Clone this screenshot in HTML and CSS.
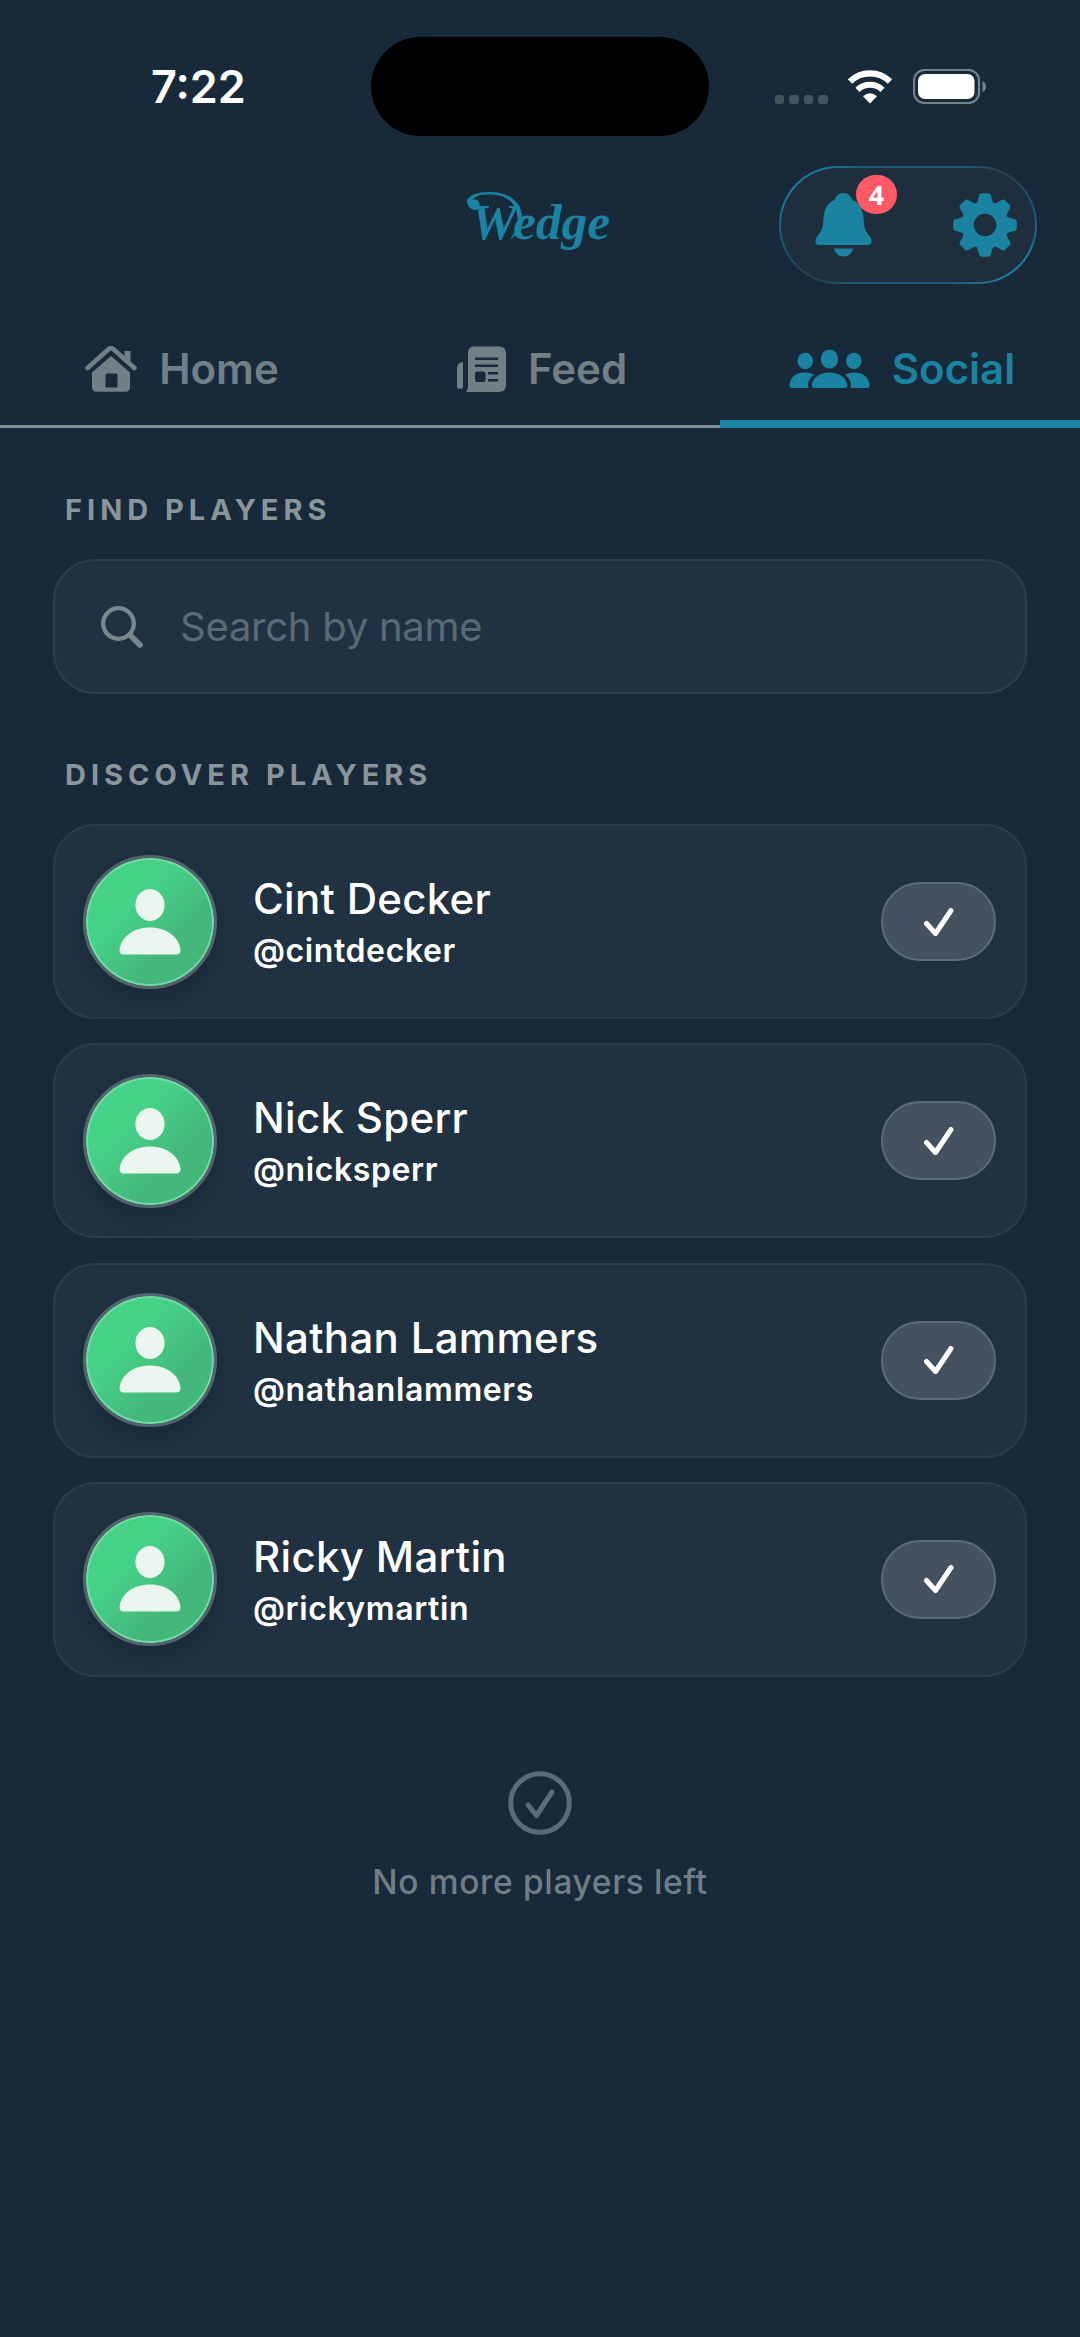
FILE: index.html
```html
<!DOCTYPE html>
<html lang="en">
<head>
<meta charset="utf-8">
<title>Wedge</title>
<link rel="stylesheet" href="styles.css">
</head>
<body>
<svg width="0" height="0" class="defs" aria-hidden="true">
  <symbol id="person" viewBox="0 0 62 66"><ellipse cx="31" cy="16" rx="14.6" ry="16"/><path d="M5 65.500Q0.500 65.500 0.500 61C2 48 14 38.500 31 38.500S60 48 61.500 61Q61.500 65.500 57 65.500Z"/></symbol>
  <symbol id="check" viewBox="0 0 30 28"><path d="M2.500 15.500L11.500 25.500L27 2.500" fill="none" stroke="currentColor" stroke-width="5" stroke-linecap="round" stroke-linejoin="round"/></symbol>
</svg>

<header>
  <div class="status">
    <div class="time">7:22</div>
    <div class="island"></div>
    <div class="signals">
      <div class="dots"><i></i><i></i><i></i><i></i></div>
      <svg class="wifi" viewBox="0 0 46 34" fill="none">
        <path d="M3 11.500A28.500 28.500 0 0 1 43 11.500" stroke="#fff" stroke-width="6.200"/>
        <path d="M10.500 19.800A18 18 0 0 1 35.500 19.800" stroke="#fff" stroke-width="6"/>
        <path d="M23 33.500L16 26.300Q23 20.300 30 26.300Z" fill="#fff"/>
      </svg>
      <svg class="battery" viewBox="0 0 74 35">
        <rect x="1" y="1" width="65" height="33" rx="10.500" fill="none" stroke="#74808a" stroke-width="2.200"/>
        <rect x="5" y="5" width="56.500" height="25" rx="7" fill="#fff"/>
        <path d="M69.500 12Q73 13.500 73 17.500T69.500 23Z" fill="#74808a"/>
      </svg>
    </div>
  </div>

  <div class="topbar">
    <svg class="logo" viewBox="0 0 148 70">
      <path d="M13 19C7 22 1 17 1 11.500C2 4 14 1.500 26 2C44 2.500 56 13 56 28C56 38 51 46 44 49C49 43 52 36 51.500 27C50.500 13 41 5 26 4.500C15 4 8 6 6.500 10C12 8 15 13 13 19Z" fill="#1a83a2"/>
      <text x="5" y="49" class="wordmark">Wedge</text>
    </svg>
    <div class="actions">
      <div class="bell">
        <svg viewBox="0 0 57 64" width="57" height="64" fill="#1a83a2"><path d="M28.500 0C33 0 36 3 37.500 7C44 9.500 48 16 48.500 25C49 35 50 38 56 45Q58 51.500 53 52H4Q-1 51.500 1 45C7 38 8 35 8.500 25C9 16 13 9.500 19.500 7C21 3 24 0 28.500 0Z"/><path d="M19 55.500H38Q36 63.500 28.500 63.500T19 55.500Z"/></svg>
        <span class="badge">4</span>
      </div>
      <svg viewBox="-32 -32 64 64" width="64" height="64" fill="#1a83a2">
        <defs><path id="tooth" d="M-9 -19L-6.500 -27Q-6 -31.800 -3 -31.800H3Q6 -31.800 6.500 -27L9 -19Z"/></defs>
        <circle r="17.500" fill="none" stroke="#1a83a2" stroke-width="12.500"/>
        <use href="#tooth"/><use href="#tooth" transform="rotate(45)"/><use href="#tooth" transform="rotate(90)"/><use href="#tooth" transform="rotate(135)"/><use href="#tooth" transform="rotate(180)"/><use href="#tooth" transform="rotate(225)"/><use href="#tooth" transform="rotate(270)"/><use href="#tooth" transform="rotate(315)"/>
      </svg>
    </div>
  </div>

  <nav class="tabs">
    <a class="tab">
      <svg viewBox="0 0 52 46" width="52" height="46" fill="currentColor"><path d="M2.500 22L23.500 3.200Q26 1.200 28.500 3.200L49.500 22" fill="none" stroke="currentColor" stroke-width="4.600" stroke-linecap="round" stroke-linejoin="round"/><path d="M39.500 5H45.500V16L39.500 11Z"/><path fill-rule="evenodd" d="M26 10L45 26.500V41Q45 45.800 40.500 45.800H11.500Q7 45.800 7 41V26.500ZM22 27.500Q20.500 27.500 20.500 29V41.500H32.500V29Q32.500 27.500 31 27.500Z"/></svg>
      <span>Home</span>
    </a>
    <a class="tab">
      <svg viewBox="0 0 49 46" width="49" height="46" fill="currentColor"><path d="M6 16V40Q6 43 3 43T0 40V23Q0 16.500 6 16Z"/><path fill-rule="evenodd" d="M17 0.500H42Q49 0.500 49 7.500V39Q49 46 42 46H9Q11 44 11 40V7Q11 0.500 17 0.500ZM18 11.500V14H41V11.500ZM18 18.500V21H41V18.500ZM20 25.500Q18 25.500 18 27.500V33.500Q18 36 20 36H26Q28.500 36 28.500 33.500V27.500Q28.500 25.500 26 25.500ZM31 26V28.500H41V26ZM31 33V35.500H41V33Z"/></svg>
      <span>Feed</span>
    </a>
    <a class="tab active">
      <svg viewBox="0 0 81 40" width="81" height="40" fill="currentColor"><ellipse cx="16.200" cy="12" rx="7.800" ry="8.300"/><ellipse cx="64.800" cy="12" rx="7.800" ry="8.300"/><ellipse cx="40.500" cy="10" rx="8.700" ry="9.500"/><path d="M26 39H55Q58.500 39 58.300 36C57 28.500 50.500 23.500 40.500 23.500S24 28.500 22.800 36Q22.800 39 26 39Z"/><path d="M19.500 39H3Q0.300 39 0.300 36C1.500 28 7 23.500 15.500 23.500Q21 23.500 25 25.500C20.500 29 18 34 19.500 39Z"/><path d="M61.500 39H78Q80.700 39 80.700 36C79.500 28 74 23.500 65.500 23.500Q60 23.500 56 25.500C60.500 29 63 34 61.500 39Z"/></svg>
      <span>Social</span>
    </a>
  </nav>
</header>

<main>
  <h2>FIND PLAYERS</h2>
  <div class="search">
    <svg viewBox="0 0 42 42" width="42" height="42" fill="none" stroke="#7b878e" stroke-linecap="round"><circle cx="17.500" cy="17.500" r="15.300" stroke-width="4.300"/><path d="M29 29L39 39" stroke-width="5.600"/></svg>
    <span>Search by name</span>
  </div>

  <h2>DISCOVER PLAYERS</h2>
  <ul class="players">
    <li class="card">
      <div class="avatar"><svg><use href="#person"/></svg></div>
      <div class="who"><span class="name">Cint Decker</span><span class="handle">@cintdecker</span></div>
      <div class="followed"><svg><use href="#check"/></svg></div>
    </li>
    <li class="card">
      <div class="avatar"><svg><use href="#person"/></svg></div>
      <div class="who"><span class="name">Nick Sperr</span><span class="handle">@nicksperr</span></div>
      <div class="followed"><svg><use href="#check"/></svg></div>
    </li>
    <li class="card">
      <div class="avatar"><svg><use href="#person"/></svg></div>
      <div class="who"><span class="name">Nathan Lammers</span><span class="handle">@nathanlammers</span></div>
      <div class="followed"><svg><use href="#check"/></svg></div>
    </li>
    <li class="card">
      <div class="avatar"><svg><use href="#person"/></svg></div>
      <div class="who"><span class="name">Ricky Martin</span><span class="handle">@rickymartin</span></div>
      <div class="followed"><svg><use href="#check"/></svg></div>
    </li>
  </ul>

  <div class="end">
    <svg viewBox="0 0 64 64" width="64" height="64" fill="none" stroke="#5a6b75" stroke-width="5"><circle cx="32" cy="32" r="29.300"/><path d="M20 34L28.500 44.500L44 21" stroke-linecap="round" stroke-linejoin="round"/></svg>
    <span>No more players left</span>
  </div>
</main>
</body>
</html>
```
FILE: styles.css
```css
* { box-sizing: border-box; }
body {
  margin: 0;
  min-height: 2337px;
  background: #182a39;
  color: #fff;
  font-family: Inter, "Liberation Sans", sans-serif;
}
svg { display: block; flex: none; }
.defs { position: absolute; }

/* status bar */
.status {
  height: 166px;
  padding-top: 7px;
  display: grid;
  grid-template-columns: 371px 338px 1fr;
  align-items: center;
}
.time { padding: 1px 0 0 151px; font-size: 45px; font-weight: 600; line-height: 54px; }
.island { height: 99px; border-radius: 50px; background: #000; }
.signals { display: flex; align-items: flex-end; padding-left: 66px; }
.dots { display: flex; gap: 5px; padding-right: 19px; }
.dots i { width: 9.400px; height: 9.400px; border-radius: 3px; background: #46545f; }
.wifi { width: 46px; height: 34px; margin-right: 20px; }
.battery { width: 74px; height: 35px; }

/* brand and actions */
.topbar {
  height: 118px;
  display: grid;
  grid-template-columns: 1fr 148px 1fr;
  align-items: center;
}
.logo { grid-column: 2; width: 148px; height: 70px; overflow: visible; }
.wordmark { font: italic 700 51.500px "Liberation Serif", serif; fill: #1a83a2; }
.actions {
  justify-self: end;
  margin-right: 43px;
  width: 258px;
  height: 118px;
  padding: 0 18px 0 34px;
  display: flex;
  align-items: center;
  justify-content: space-between;
  border: 2px solid transparent;
  border-radius: 59px;
  background:
    linear-gradient(#1e2e3d, #1e2e3d) padding-box,
    conic-gradient(#1c5a78 0deg, #1c5a78 45deg, #2a3b49 62deg, #1c5a78 85deg, #1a7f9e 105deg, #1a7f9e 120deg, #1c5a78 140deg, #1c5a78 225deg, #2a3b49 242deg, #1c5a78 265deg, #1a7f9e 285deg, #1a7f9e 300deg, #1c5a78 320deg) border-box;
}
.bell { position: relative; }
.badge {
  position: absolute;
  left: 41px;
  top: -18px;
  width: 41px;
  height: 39px;
  border-radius: 20px;
  background: #ff5a66;
  font: 700 27px/39px "Open Sans", sans-serif;
  text-align: center;
}

/* tabs */
.tabs { display: grid; grid-template-columns: repeat(3, 1fr); height: 144px; }
.tab {
  display: flex;
  align-items: center;
  justify-content: center;
  gap: 22px;
  padding: 28px 0 0 4px;
  border-bottom: 3px solid #7f8c93;
  color: #737f87;
  font-size: 42px;
  font-weight: 570;
}
.tab.active { padding-top: 33px; color: #1a83a2; border-bottom: 8px solid #1a83a2; }

/* content */
main { padding: 0 53px; }
h2 {
  margin: 0;
  padding-left: 12px;
  font-size: 29px;
  line-height: 36px;
  font-weight: 700;
  letter-spacing: 5px;
  color: #8a949b;
}
main > h2:first-child { padding-top: 64px; }
.search {
  margin: 31px 0 63px;
  height: 135px;
  padding: 0 46px;
  display: flex;
  align-items: center;
  gap: 37px;
  border: 2px solid #2d3e4b;
  border-radius: 42px;
  background: #203242;
  color: #596a74;
  font-size: 40px;
  letter-spacing: -.25px;
}
.players { list-style: none; margin: 31px 0 0; padding: 0; display: grid; gap: 24.300px; }
.card {
  height: 195px;
  padding: 0 29px 0 28px;
  display: flex;
  align-items: center;
  border: 2px solid #2b3c4a;
  border-radius: 42px;
  background: #203242;
}
.avatar {
  width: 134px;
  height: 134px;
  display: grid;
  place-items: center;
  border: 3px solid #53646e;
  border-radius: 50%;
  background: linear-gradient(135deg, #45d287 35%, #44b77b 68%);
  background-clip: padding-box;
  box-shadow: inset 0 0 0 2px #72dba3, 0 12px 24px rgba(15, 30, 45, .45);
}
.avatar svg { width: 62px; height: 66px; fill: #ebf6f1; }
.who { flex: 1; padding: 5px 0 0 36px; display: flex; flex-direction: column; align-items: flex-start; }
.name { font-size: 42px; line-height: 53px; font-weight: 550; letter-spacing: .3px; }
.handle { font-size: 32px; line-height: 51px; font-weight: 600; letter-spacing: .6px; }
.followed {
  width: 115px;
  height: 79px;
  display: grid;
  place-items: center;
  border: 2px solid #5c6c76;
  border-radius: 39px;
  background: #44525f;
}
.followed svg { width: 30px; height: 28px; }
.end {
  padding-top: 94px;
  display: flex;
  flex-direction: column;
  align-items: center;
  gap: 26px;
  color: #717e86;
  font-size: 33.500px;
  line-height: 42px;
  font-weight: 500;
  letter-spacing: .650px;
}
```
